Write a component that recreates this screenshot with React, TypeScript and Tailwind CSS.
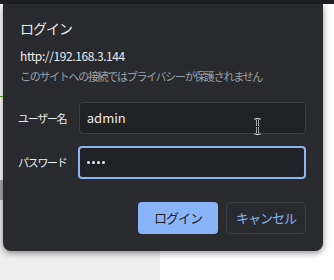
import React from "react";

const font = { fontFamily: '"Segoe UI", "Noto Sans CJK JP", "Noto Sans", sans-serif' };

function IBeam() {
  return (
    <svg width="9" height="17" viewBox="0 0 9 17" className="absolute left-[253px] top-[118px]">
      <path
        d="M1 1h2.5L4.5 2 5.5 1H8M4.5 2v13M1 16h2.5l1-1 1 1H8M3 8.5h3"
        fill="none"
        stroke="#ffffff"
        strokeWidth="2.2"
      />
      <path
        d="M1 1h2.5L4.5 2 5.5 1H8M4.5 2v13M1 16h2.5l1-1 1 1H8M3 8.5h3"
        fill="none"
        stroke="#000000"
        strokeWidth="1"
      />
    </svg>
  );
}

export default function App() {
  return (
    <div className="relative w-[334px] h-[280px] overflow-hidden bg-white" style={font}>
      {/* page behind the dialog */}
      <div className="flex flex-col h-full">
        <div className="h-[4px] bg-[#1f2023]" />
        <div className="h-[92px] bg-white" />
        <div className="h-[1px] w-[40px] bg-[#5fb000]" />
        <div className="h-[83px] bg-white" />
        <div className="h-[20px] w-[40px] bg-[#a8a8a8]" />
        <div className="flex flex-1">
          <div className="w-[160px] bg-[#eeeeee]" />
          <div className="flex-1 bg-white" />
        </div>
      </div>

      {/* login dialog */}
      <div className="absolute left-[3px] top-[4px] w-[320px] h-[247px] bg-[#292a2d] rounded-b-lg shadow-[0_2px_6px_rgba(0,0,0,0.45)] px-[17px] pt-[14px] flex flex-col">
        <h2 className="text-[14px] leading-[20px] text-[#e8eaed] tracking-[-1px]">ログイン</h2>
        <p className="mt-[9px] text-[12px] leading-[18px] text-[#e8eaed] tracking-[-0.4px]">http://192.168.3.144</p>
        <p className="mt-[2px] text-[11px] leading-[18px] text-[#9aa0a6] tracking-[-1.3px]">
          このサイトへの接続ではプライバシーが保護されません
        </p>

        <div className="mt-[17px] flex flex-col gap-[12px]">
          <div className="flex items-center">
            <label className="w-[61px] -ml-[2px] text-[11px] text-[#e8eaed] tracking-[-1.3px]">ユーザー名</label>
            <div className="w-[228px] h-[32px] rounded-[4px] border border-[#3c4043] bg-[#202124] flex items-center px-[7px] text-[13px] text-[#e8eaed]">
              admin
            </div>
          </div>
          <div className="flex items-center">
            <label className="w-[61px] -ml-[2px] text-[11px] text-[#e8eaed] tracking-[-1.3px]">パスワード</label>
            <div className="w-[229px] h-[33px] -ml-[1px] rounded-[4px] border-2 border-[#8ab4f8] bg-[#202124] flex items-center px-[7px] gap-[1.5px]">
              {[0, 1, 2, 3].map((i) => (
                <span key={i} className="w-[3.5px] h-[3.5px] rounded-full bg-[#e8eaed]" />
              ))}
            </div>
          </div>
        </div>

        <div className="mt-[23px] flex justify-end gap-[8px]">
          <button className="w-[80px] h-[32px] rounded-[4px] bg-[#8ab4f8] text-[#202124] text-[13px] tracking-[-1px]">
            ログイン
          </button>
          <button className="w-[80px] h-[32px] rounded-[4px] border border-[#3c4043] text-[#8ab4f8] text-[13px] tracking-[-1px]">
            キャンセル
          </button>
        </div>
      </div>

      <IBeam />
    </div>
  );
}
